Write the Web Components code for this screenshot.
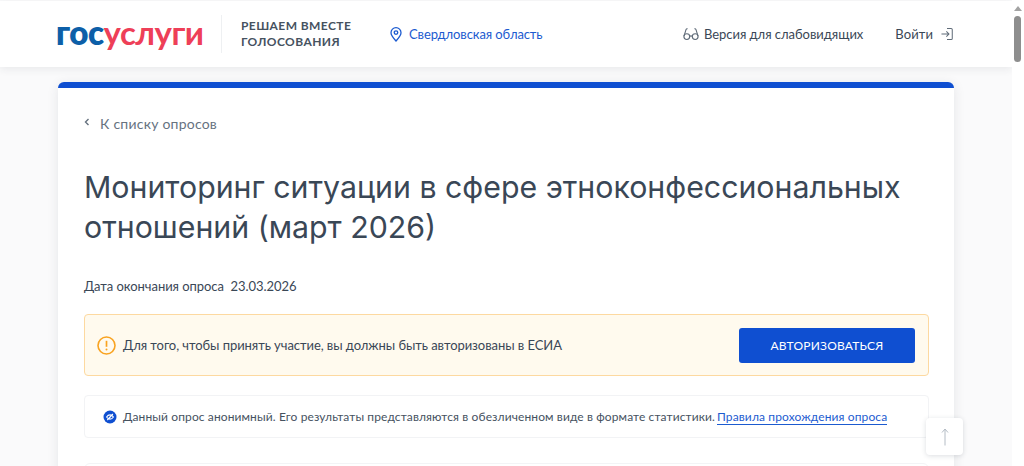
<!DOCTYPE html>
<html lang="ru">
<head>
<meta charset="utf-8">
<title>Голосования</title>
<style>
    html, body { margin: 0; height: 466px; overflow: hidden; background: #fff; }
    body { font-family: Lato, "Noto Sans", sans-serif; color: #2f3d4d; }
    app-shell { height: 466px; }
</style>
</head>
<body>
<app-shell>
    <site-header slot="header"></site-header>
    <poll-card>
        <back-link>К списку опросов</back-link>
        <h1 slot="title">Мониторинг ситуации в сфере этноконфессиональных отношений (март 2026)</h1>
        <span slot="date">Дата окончания опроса&nbsp; 23.03.2026</span>
        <auth-notice slot="notes">Для того, чтобы принять участие, вы должны быть авторизованы в ЕСИА</auth-notice>
        <anon-note slot="notes"></anon-note>
    </poll-card>
    <up-button slot="overlay"></up-button>
    <fake-scrollbar slot="overlay"></fake-scrollbar>
</app-shell>

<script>
// каркас страницы
class AppShell extends HTMLElement {
    constructor() {
        super();
        this.attachShadow({ mode: 'open' });
        this.shadowRoot.innerHTML = `
            <style>
                :host { display: block; position: relative; overflow: hidden; background: #fff; }
                .page {
                    width: 1012px;
                    height: 466px;
                    box-sizing: border-box;
                    padding-top: 1px;
                    background: #fafafb;
                    overflow: hidden;
                }
                .content { padding: 15px 58px 0; }
            </style>
            <div class="page">
                <slot name="header"></slot>
                <div class="content"><slot></slot></div>
            </div>
            <slot name="overlay"></slot>
        `;
    }
}

class SiteHeader extends HTMLElement {
    constructor() {
        super();
        this.attachShadow({ mode: 'open' });
        this.shadowRoot.innerHTML = `
            <style>
                :host {
                    display: flex;
                    align-items: center;
                    height: 66px;
                    padding: 0 59px 0 58px;
                    background: #fff;
                    box-shadow: 0 2px 8px rgba(40, 50, 70, 0.09);
                    position: relative;
                    font-size: 13px;
                    color: #3a4756;
                }
                .logo-wrap {
                    display: flex;
                    align-items: center;
                    box-sizing: border-box;
                    width: 164px;
                    height: 38px;
                    border-right: 1px solid #eef0f2;
                }
                .logo {
                    font: 800 33px/1 Lato, sans-serif;
                    letter-spacing: -0.5px;
                    margin: -4px 0 0 -2px;
                    white-space: nowrap;
                }
                .gos { color: #0d5fa8; }
                .usl { color: #ee3f58; font-weight: 700; }
                .slogan {
                    margin-left: 19px;
                    width: 149px;
                    font-weight: 700;
                    font-size: 12px;
                    line-height: 16px;
                    letter-spacing: 0.42px;
                    color: #46525f;
                    text-transform: uppercase;
                }
                .region {
                    display: flex;
                    align-items: center;
                    gap: 7px;
                    color: #1c5bd0;
                    letter-spacing: -0.1px;
                }
                .right { margin-left: auto; display: flex; align-items: center; }
                .low { display: flex; align-items: center; gap: 5px; letter-spacing: -0.03px; }
                .login { display: flex; align-items: center; gap: 8px; margin-left: 32px; letter-spacing: 0.1px; }
                svg { display: block; flex: none; }
            </style>
            <div class="logo-wrap">
                <div class="logo"><span class="gos">гос</span><span class="usl">услуги</span></div>
            </div>
            <div class="slogan">Решаем вместе голосования</div>
            <div class="region">
                <svg width="12" height="15" viewBox="0 0 12 15" fill="none" stroke="#1c5bd0" stroke-width="1.3">
                    <path d="M6 14C3.5 11.2 1 8.6 1 5.7a5 5 0 0 1 10 0C11 8.6 8.500 11.200 6 14Z"/>
                    <circle cx="6" cy="5.6" r="1.8"/>
                </svg>
                <span>Свердловская область</span>
            </div>
            <div class="right">
                <div class="low">
                    <svg width="16" height="14" viewBox="0 0 16 14" fill="none" stroke="#5f6b78" stroke-width="1.1">
                        <circle cx="3.8" cy="9.6" r="2.9"/>
                        <circle cx="12.2" cy="9.6" r="2.9"/>
                        <path d="M6.700 9.400c.8-.6 1.800-.6 2.600 0M1 9.200 3 2.600C3.200 2 3.800 1.600 4.600 1.800M15 9.200 13 2.600c-.2-.6-.8-1-1.600-.8"/>
                    </svg>
                    <span>Версия для слабовидящих</span>
                </div>
                <div class="login">
                    <span>Войти</span>
                    <svg width="12" height="14" viewBox="0 0 13 14" fill="none" stroke="#5f6b78" stroke-width="1.1">
                        <path d="M6.500 1H11a1.200 1.200 0 0 1 1.200 1.200v9.600A1.200 1.200 0 0 1 11 13H6.500M.5 7h8M5.800 4.200 8.600 7l-2.800 2.800"/>
                    </svg>
                </div>
            </div>
        `;
    }
}

class PollCard extends HTMLElement {
    constructor() {
        super();
        this.attachShadow({ mode: 'open' });
        this.shadowRoot.innerHTML = `
            <style>
                :host {
                    display: block;
                    width: 896px;
                    height: 420px;
                    box-sizing: border-box;
                    padding: 26px 26px 0;
                    background: #fff;
                    border-top: 6px solid #0f4fd1;
                    border-radius: 6px 6px 0 0;
                    box-shadow: 0 2px 12px rgba(40, 50, 70, 0.1);
                }
                ::slotted(h1) {
                    margin: 35px 0 0;
                    font: 400 30.300px/40px Inter, "Noto Sans", sans-serif;
                    color: #3a4756;
                    width: 840px;
                }
                ::slotted([slot="date"]) {
                    display: block;
                    margin-top: 31px;
                    font-size: 13px;
                    line-height: 16px;
                    letter-spacing: -0.05px;
                    color: #3a4756;
                }
                .notes { margin-top: 20px; display: flex; flex-direction: column; gap: 19px; width: 845px; }
                .next {
                    margin-top: 25px;
                    height: 60px;
                    border: 1px solid #f3f4f6;
                    border-radius: 6px;
                    width: 843px;
                }
            </style>
            <slot></slot>
            <slot name="title"></slot>
            <slot name="date"></slot>
            <div class="notes"><slot name="notes"></slot></div>
            <div class="next"></div>
        `;
    }
}

class BackLink extends HTMLElement {
    constructor() {
        super();
        this.attachShadow({ mode: 'open' });
        this.shadowRoot.innerHTML = `
            <style>
                :host {
                    display: flex;
                    align-items: center;
                    gap: 10px;
                    height: 18px;
                    font-size: 14px;
                    letter-spacing: 0.23px;
                    color: #66727f;
                }
                svg { display: block; margin-top: -3px; }
            </style>
            <svg width="6" height="8" viewBox="0 0 6 8" fill="none" stroke="#66727f" stroke-width="1.4"><path d="M4.500 1 1.500 4l3 3"/></svg>
            <slot></slot>
        `;
    }
}

class AuthNotice extends HTMLElement {
    constructor() {
        super();
        this.attachShadow({ mode: 'open' });
        this.shadowRoot.innerHTML = `
            <style>
                :host {
                    display: flex;
                    align-items: center;
                    box-sizing: border-box;
                    height: 62px;
                    padding: 0 13px 0 12px;
                    background: #fffaee;
                    border: 1px solid #fdd9a0;
                    border-radius: 4px;
                    font-size: 13px;
                    letter-spacing: -0.06px;
                    color: #3a4756;
                }
                svg { display: block; flex: none; margin-right: 7px; }
                .btn {
                    margin-left: auto;
                    width: 176px;
                    height: 35px;
                    border: 0;
                    border-radius: 3px;
                    background: #0f4fd1;
                    color: #fff;
                    font: 400 12px Lato, sans-serif;
                    letter-spacing: 0.2px;
                }
            </style>
            <svg width="19" height="19" viewBox="0 0 19 19" fill="none">
                <circle cx="9.500" cy="9.500" r="8.500" stroke="#f9a320" stroke-width="1.600"/>
                <path d="M9.500 4.800v6" stroke="#f9a320" stroke-width="1.700"/>
                <circle cx="9.500" cy="13.600" r="1" fill="#f9a320"/>
            </svg>
            <span><slot></slot></span>
            <button class="btn">АВТОРИЗОВАТЬСЯ</button>
        `;
    }
}

class AnonNote extends HTMLElement {
    constructor() {
        super();
        this.attachShadow({ mode: 'open' });
        this.shadowRoot.innerHTML = `
            <style>
                :host {
                    display: flex;
                    align-items: center;
                    box-sizing: border-box;
                    height: 43px;
                    padding: 0 18px;
                    background: #fff;
                    border: 1px solid #f2f3f5;
                    border-radius: 4px;
                    font-size: 12px;
                    letter-spacing: 0.11px;
                    color: #46525f;
                    white-space: nowrap;
                }
                svg { display: block; flex: none; margin-right: 6px; }
                a {
                    margin-left: 2px;
                    letter-spacing: 0.12px;
                    color: #1c5bd0;
                    text-decoration: none;
                    border-bottom: 1px solid #1c5bd0;
                }
            </style>
            <svg width="14" height="14" viewBox="0 0 14 14" fill="none">
                <circle cx="7" cy="7" r="6.500" fill="#0f4fd1"/>
                <path d="M3.600 7c.9-1.400 2-2.100 3.400-2.100S9.500 5.600 10.400 7C9.500 8.400 8.400 9.100 7 9.100S4.500 8.400 3.600 7ZM4.300 10 9.900 4" stroke="#fff" stroke-width="1.100"/>
            </svg>
            <span>Данный опрос анонимный. Его результаты представляются в обезличенном виде в формате статистики.</span>
            <a href="#">Правила прохождения опроса</a>
        `;
    }
}

class UpButton extends HTMLElement {
    constructor() {
        super();
        this.attachShadow({ mode: 'open' });
        this.shadowRoot.innerHTML = `
            <style>
                :host {
                    position: absolute;
                    left: 926px;
                    top: 418px;
                    width: 37px;
                    height: 37px;
                    display: flex;
                    align-items: center;
                    justify-content: center;
                    background: #fff;
                    border-radius: 4px;
                    box-shadow: 0 1px 5px rgba(40, 50, 70, 0.16);
                }
            </style>
            <svg width="8" height="18" viewBox="0 0 8 18" fill="none" stroke="#b4bcc5" stroke-width="1"><path d="M4 17.500V1M1 4.500 4 1l3 3.500"/></svg>
        `;
    }
}

// полоса прокрутки как на снимке
class FakeScrollbar extends HTMLElement {
    constructor() {
        super();
        this.attachShadow({ mode: 'open' });
        this.shadowRoot.innerHTML = `
            <style>
                :host {
                    position: absolute;
                    right: 0;
                    top: 0;
                    width: 12px;
                    height: 466px;
                    background: #fff;
                }
                .arrow {
                    position: absolute;
                    left: 2px;
                    top: 6px;
                    border: 4px solid transparent;
                    border-top: 0;
                    border-bottom: 5px solid #a3a3a3;
                }
                .thumb {
                    position: absolute;
                    left: 2px;
                    top: 16px;
                    width: 7px;
                    height: 46px;
                    background: #8e8e8e;
                    border-radius: 4px;
                }
            </style>
            <div class="arrow"></div>
            <div class="thumb"></div>
        `;
    }
}

customElements.define('app-shell', AppShell);
customElements.define('site-header', SiteHeader);
customElements.define('poll-card', PollCard);
customElements.define('back-link', BackLink);
customElements.define('auth-notice', AuthNotice);
customElements.define('anon-note', AnonNote);
customElements.define('up-button', UpButton);
customElements.define('fake-scrollbar', FakeScrollbar);
</script>
</body>
</html>
